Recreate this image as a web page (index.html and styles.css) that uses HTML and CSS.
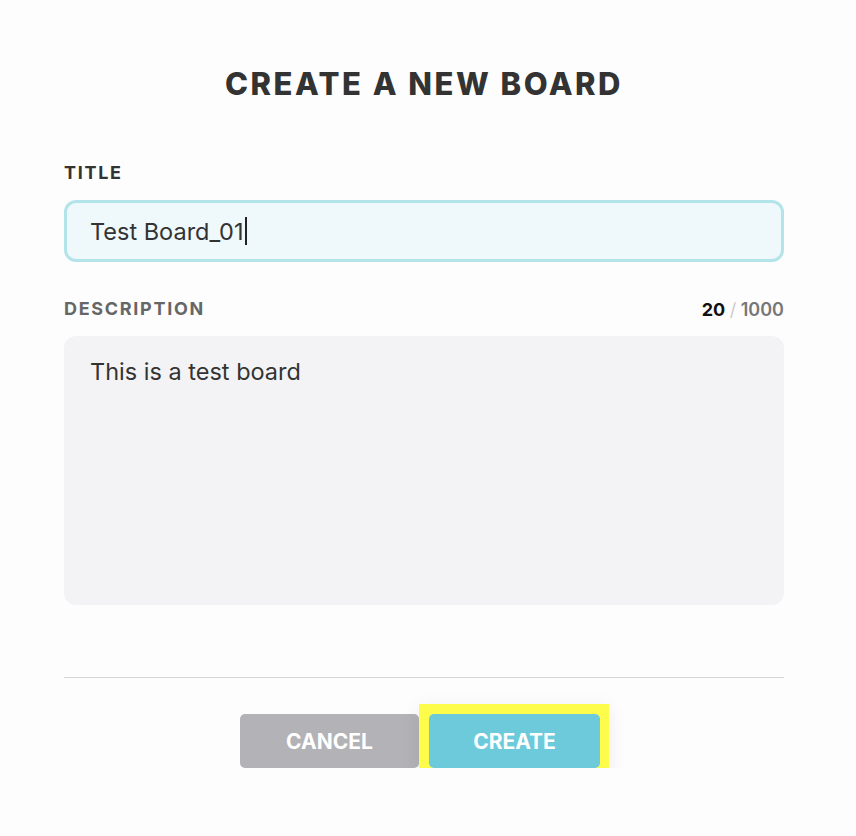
FILE: index.html
```html
<!DOCTYPE html>
<html lang="en">

<head>
  <link rel="stylesheet" href="styles.css">
</head>

<body>
  <div class="board-form">
    <h1 class="form-title">CREATE A NEW BOARD</h1>

    <div class="field">
      <label class="field-label" for="title">TITLE</label>
      <div class="title-input" id="title">Test Board_01<span class="caret"></span></div>
    </div>

    <div class="field">
      <div class="label-row">
        <label class="field-label muted" for="description">DESCRIPTION</label>
        <div class="counter"><b>20</b> <span class="slash">/</span> 1000</div>
      </div>
      <div class="desc-input" id="description">This is a test board</div>
    </div>

    <hr class="divider">

    <div class="actions">
      <button class="btn btn-cancel">CANCEL</button>
      <span class="highlight">
        <button class="btn btn-create">CREATE</button>
      </span>
    </div>
  </div>
</body>

</html>
```

FILE: styles.css
```css
body {
  font-family: Inter, 'Noto Sans', sans-serif;
  background-color: #fdfdfd;
  margin: 0;
  color: #333;
}

.board-form {
  width: 720px;
  padding: 64px 0 0 64px;
}

.form-title {
  margin: 0 0 58px;
  text-align: center;
  font-size: 31px;
  font-weight: 800;
  letter-spacing: 2.5px;
  line-height: 40px;
  color: #333;
}

.field {
  margin-bottom: 36px;
}

.field-label {
  display: block;
  font-size: 18px;
  font-weight: 700;
  letter-spacing: 1.7px;
  line-height: 22px;
  color: #333;
  margin-bottom: 16px;
}

.field-label.muted {
  color: #666;
  margin-bottom: 0;
}

.label-row {
  display: flex;
  justify-content: space-between;
  align-items: center;
  margin-bottom: 16px;
}

.counter {
  font-size: 18px;
  font-weight: 600;
  color: #777;
}

.counter b {
  color: #111;
  font-weight: 700;
}

.counter .slash {
  color: #ccc;
  font-weight: 400;
}

.title-input {
  height: 62px;
  box-sizing: border-box;
  border: 3px solid #b2e4ea;
  border-radius: 12px;
  background-color: #eff8fa;
  padding: 0 23px;
  display: flex;
  align-items: center;
  font-size: 23.5px;
  color: #333;
}

.caret {
  display: inline-block;
  width: 2px;
  height: 28px;
  background-color: #222;
  margin-left: 1px;
}

.desc-input {
  height: 269px;
  box-sizing: border-box;
  border-radius: 12px;
  background-color: #f3f3f5;
  padding: 20px 26px;
  font-size: 23.5px;
  line-height: 32px;
  color: #333;
}

.divider {
  border: none;
  border-top: 1px solid #d4d4d4;
  margin: 72px 0 36px;
}

.actions {
  display: flex;
  justify-content: center;
  align-items: center;
  gap: 10px;
  padding-right: 8px;
}

.btn {
  height: 54px;
  border: none;
  border-radius: 5px;
  font-family: Inter, 'Noto Sans', sans-serif;
  font-size: 21px;
  font-weight: 700;
  color: #fff;
  cursor: pointer;
}

.btn-cancel {
  width: 179px;
  background-color: #b3b2b7;
}

.highlight {
  display: flex;
  padding: 10px 9px 10px 10px;
  margin: -10px -9px -10px -10px;
  background-color: #fefc4a;
  box-shadow: 0 4px 18px rgba(0, 0, 0, 0.08);
}

.btn-create {
  width: 171px;
  background-color: #6dcadb;
}
```
